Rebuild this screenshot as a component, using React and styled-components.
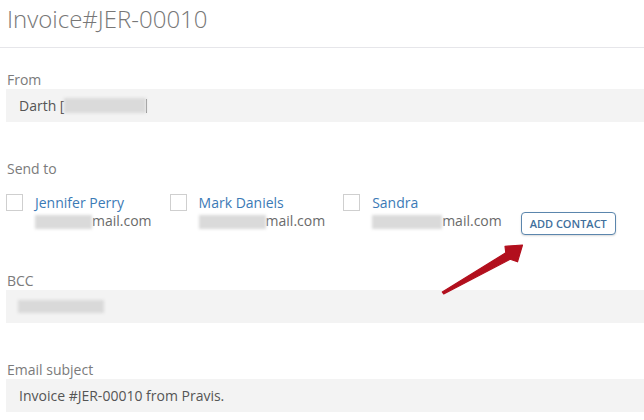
import React from "react";
import styled, { createGlobalStyle } from "styled-components";

const Global = createGlobalStyle`
  html, body { margin: 0; padding: 0; background: #fff; }
  body { font-family: "Open Sans", "Liberation Sans", sans-serif; }
`;

const Page = styled.div`
  position: relative;
  width: 644px;
  height: 420px;
  overflow: hidden;
  background: #fff;
`;

const Header = styled.div`
  height: 48px;
  box-sizing: border-box;
  padding: 3px 7px 0;
  border-bottom: 1px solid #e6e6ea;
`;

const Title = styled.h1`
  margin: 0;
  font-size: 24px;
  line-height: 32px;
  font-weight: 300;
  color: #777;
`;

const Body = styled.div`
  padding: 23px 0 0 6px;
  display: flex;
  flex-direction: column;
`;

const Field = styled.div`
  display: flex;
  flex-direction: column;
  margin-bottom: ${(p) => p.$mb || 38}px;
`;

const Label = styled.div`
  font-size: 14px;
  line-height: 18px;
  color: #7b7b7b;
  padding-left: 1px;
`;

const Input = styled.div`
  height: 33px;
  box-sizing: border-box;
  background: #f3f3f3;
  display: flex;
  align-items: center;
  padding-left: 13px;
  font-size: 14px;
  color: #555;
`;

const Blur = styled.span`
  display: inline-block;
  width: ${(p) => p.$w}px;
  height: ${(p) => p.$h || 13}px;
  background: ${(p) => p.$bg || "#dadada"};
  filter: blur(1.6px);
  vertical-align: middle;
`;

const Cursor = styled.span`
  display: inline-block;
  width: 1px;
  height: 14px;
  background: #888;
  vertical-align: middle;
`;

const Contacts = styled.div`
  display: flex;
  align-items: flex-start;
  margin-top: 16px;
`;

const Contact = styled.div`
  display: flex;
  align-items: flex-start;
  gap: 12px;
  margin-right: ${(p) => p.$mr}px;
`;

const Box = styled.span`
  width: 17px;
  height: 17px;
  box-sizing: border-box;
  border: 1px solid #cfcfcf;
  background: #fff;
  flex: none;
`;

const Info = styled.div`
  display: flex;
  flex-direction: column;
  font-size: 14px;
  line-height: 18px;
`;

const Name = styled.a`
  color: #3b7ab6;
  text-decoration: none;
`;

const Email = styled.span`
  color: #6a6a6a;
  white-space: nowrap;
`;

const AddButton = styled.button`
  margin-top: 18px;
  height: 23px;
  width: 95px;
  box-sizing: border-box;
  border: 1px solid #5b86ad;
  border-radius: 4px;
  background: #fff;
  box-shadow: 0 1px 2px rgba(0, 0, 0, 0.15);
  color: #3f6f9c;
  font-family: "Open Sans", "Liberation Sans", sans-serif;
  font-size: 11px;
  font-weight: 600;
  padding: 0;
  cursor: pointer;
`;

const Overlay = styled.svg`
  position: absolute;
  left: 0;
  top: 0;
  pointer-events: none;
`;

const contacts = [
  { name: "Jennifer Perry", blur: 57, mr: 18 },
  { name: "Mark Daniels", blur: 67, mr: 18 },
  { name: "Sandra", blur: 70, mr: 19 },
];

export default function App() {
  return (
    <Page>
      <Global />
      <Header>
        <Title>Invoice#JER-00010</Title>
      </Header>
      <Body>
        <Field>
          <Label>From</Label>
          <Input>
            Darth [<Blur $w={82} $h={15} />
            <Cursor />
          </Input>
        </Field>
        <Field $mb={37}>
          <Label>Send to</Label>
          <Contacts>
            {contacts.map((c) => (
              <Contact key={c.name} $mr={c.mr}>
                <Box />
                <Info>
                  <Name href="#">{c.name}</Name>
                  <Email>
                    <Blur $w={c.blur} $h={14} />
                    mail.com
                  </Email>
                </Info>
              </Contact>
            ))}
            <AddButton>ADD CONTACT</AddButton>
          </Contacts>
        </Field>
        <Field>
          <Label>BCC</Label>
          <Input>
            <Blur $w={86} $h={13} $bg="#d9d9d9" style={{ marginLeft: -1 }} />
          </Input>
        </Field>
        <Field>
          <Label>Email subject</Label>
          <Input>Invoice #JER-00010 from Pravis.</Input>
        </Field>
      </Body>
      <Overlay width="644" height="420" viewBox="0 0 644 420">
        <polygon
          points="442.3,292 505.8,252.8 505,246.3 522.5,245 517.5,261.8 510.2,259.2 443.7,294"
          fill="#b20f1d"
          stroke="#b20f1d"
          strokeWidth="1.2"
          strokeLinejoin="round"
        />
      </Overlay>
    </Page>
  );
}
